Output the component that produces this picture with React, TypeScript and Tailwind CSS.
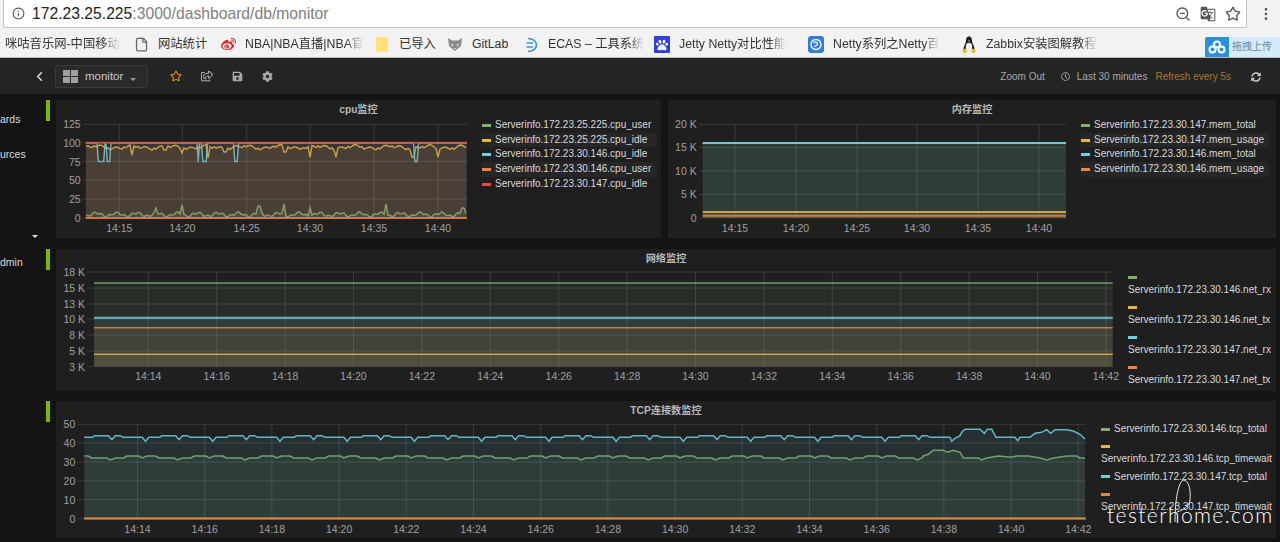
import React from 'react';
import { Info, ZoomOut, Star, EllipsisVertical, File, ChevronLeft } from 'lucide-react';
import { FaRegStar, FaRegShareSquare, FaSave, FaCog, FaRegClock, FaSyncAlt, FaWeibo, FaPaw } from 'react-icons/fa';
import { MdGTranslate } from 'react-icons/md';

const GREEN = '#7eb26d';
const YELLOW = '#eab839';
const BLUE = '#6ed0e0';
const ORANGE = '#ef843c';
const RED = '#e24d42';

type Pt = [number, number];
type Series = { color: string; points: Pt[]; width?: number };
type ChartProps = {
  box: [number, number, number, number];
  plot: { left: number; right: number; top: number; bottom: number };
  yTicks: [string, number][];
  xTicks: [string, number][];
  labelY: number;
  labelGap?: number;
  series: Series[];
};

const toPath = (pts: Pt[]) => pts.map((p) => `${p[0].toFixed(1)},${p[1].toFixed(1)}`).join(' ');

// Charts are drawn in page coordinates, the viewBox just crops the panel's part
const Chart: React.FC<ChartProps> = ({ box, plot, yTicks, xTicks, labelY, labelGap = 5, series }) => (
  <svg
    width={box[2]}
    height={box[3]}
    viewBox={box.join(' ')}
    className="shrink-0"
    fontFamily="'Liberation Sans', sans-serif"
    fontSize="10.5"
  >
    {yTicks.map(([label, y]) => (
      <g key={label}>
        <line x1={plot.left - labelGap + 2} x2={plot.right} y1={y} y2={y} stroke="#d8d9da" strokeOpacity="0.15" />
        <text x={plot.left - labelGap} y={y + 4} textAnchor="end" fill="#a0a0a0">{label}</text>
      </g>
    ))}
    {xTicks.map(([label, x]) => (
      <g key={label}>
        <line x1={x} x2={x} y1={plot.top} y2={plot.bottom} stroke="#d8d9da" strokeOpacity="0.15" />
        <text x={x} y={labelY + 4} textAnchor="middle" fill="#a0a0a0">{label}</text>
      </g>
    ))}
    {series.map((s, i) => (
      <g key={i}>
        <polygon
          points={`${toPath(s.points)} ${s.points[s.points.length - 1][0]},${plot.bottom} ${s.points[0][0]},${plot.bottom}`}
          fill={s.color}
          fillOpacity="0.1"
        />
        <polyline points={toPath(s.points)} fill="none" stroke={s.color} strokeWidth={s.width ?? 1.5} strokeOpacity="0.85" />
      </g>
    ))}
  </svg>
);

const flat = (x0: number, x1: number, y: number): Pt[] => [[x0, y], [x1, y]];

const cpuYellow = (): Pt[] => {
  const dips: Pt[] = [[132, 155], [182.5, 153], [208, 158], [285, 152], [310, 157], [336, 157], [413, 157], [438, 157], [225, 152], [165, 150]];
  const pts: Pt[] = [];
  for (let x = 86; x <= 467; x += 2) {
    let y = 147.5 + 1.6 * Math.sin(x * 0.42) + 1.3 * Math.sin(x * 0.17 + 1) - (Math.sin(x * 0.42) > 0.9 ? 2 : 0);
    dips.forEach(([dx, dy]) => {
      if (Math.abs(dx - x) < 1.5) y = dy;
    });
    pts.push([x, y]);
  }
  return pts;
};

const cpuGreen = (): Pt[] => {
  const spikes: Pt[] = [[156.5, 208], [182.7, 205], [259, 206], [284.5, 204], [310, 208], [386.5, 204], [463, 208]];
  const pts: Pt[] = [];
  for (let x = 86; x <= 467; x += 2) {
    let y = 214.5 + 1.7 * Math.sin(x * 0.31) + 1.1 * Math.sin(x * 0.83 + 2);
    spikes.forEach(([sx, sy]) => {
      if (Math.abs(sx - x) < 1.2) y = sy;
    });
    pts.push([x, y]);
  }
  return pts;
};

const cpuBlue = (): Pt[] => {
  const dips: Pt[] = [[97, 105], [106, 111], [197, 199.5], [201.5, 207.5], [233.5, 238.5], [413.5, 418.5]];
  const pts: Pt[] = [[86, 143]];
  dips.forEach(([a, b]) => {
    pts.push([a, 143], [a + 1.3, 161.5], [b - 1.3, 161.5], [b, 143]);
  });
  pts.push([467, 143]);
  return pts;
};

// Traced from the reference at 3x, repeats every two minutes
const tcpBlueCycle: Pt[] = [[0, 127], [25, 127], [30, 122], [72, 122], [82, 134], [92, 122], [107, 122], [115, 127], [172, 127], [182, 139], [192, 127]];
const tcpGreenCycle: Pt[] = [[0, 183], [12, 183], [22, 189], [67, 189], [77, 195], [92, 189], [117, 189], [127, 183], [162, 183], [172, 189], [187, 183]];
const tcpBlueTail: Pt[] = [[270, 127], [275, 139], [285, 130], [300, 122], [305, 112], [315, 103], [360, 103], [373, 115], [382, 103], [395, 103], [408, 127], [465, 127], [473, 137], [480, 127], [510, 127], [525, 115], [545, 112], [560, 104], [572, 115], [585, 104], [620, 104], [640, 108], [660, 118], [675, 132]];
const tcpGreenTail: Pt[] = [[190, 183], [205, 178], [220, 166], [250, 166], [262, 172], [280, 166], [300, 172], [310, 189], [355, 189], [365, 195], [380, 189], [415, 183], [455, 187], [470, 183], [505, 183], [540, 189], [560, 195], [580, 189], [620, 183], [650, 183], [660, 189], [675, 189]];

const tcpLine = (cycle: Pt[], tail: Pt[]): Pt[] => {
  const tailStart = 860 + tail[0][0] / 3;
  const pts: Pt[] = [];
  for (let c = 0; c < 16; c++) {
    cycle.forEach(([x, y]) => {
      const gx = 84.3 + (c * 200 + x) / 3 * 1.0085;
      if (gx < tailStart) pts.push([gx, 395 + y / 3]);
    });
  }
  tail.forEach(([x, y]) => pts.push([860 + x / 3, 395 + y / 3]));
  return pts;
};

const twoMinuteTicks = (start: number, step: number): [string, number][] =>
  Array.from({ length: 15 }, (_, i) => {
    const minute = 14 + i * 2;
    return [`14:${minute}`, start + i * step] as [string, number];
  });

const cpuTicks: [string, number][] = [['14:15', 119.3], ['14:20', 182.3], ['14:25', 246.7], ['14:30', 310], ['14:35', 374], ['14:40', 438]];
const memTicks: [string, number][] = [['14:15', 735], ['14:20', 796], ['14:25', 857], ['14:30', 917], ['14:35', 978], ['14:40', 1039]];

const Legend: React.FC<{ items: [string, string][]; rowClass: string; stripe?: boolean }> = ({ items, rowClass, stripe }) => (
  <>
    {items.map(([color, label], i) => (
      <div key={label} className={`${rowClass} ${stripe && i % 2 === 1 ? 'bg-[#262627]' : ''}`}>
        <span className="inline-block w-[9px] h-[3px] mr-[4px] align-middle" style={{ backgroundColor: color }} />
        {label}
      </div>
    ))}
  </>
);

const Bookmark: React.FC<{ icon?: React.ReactNode; label: string; width: string; fade?: boolean }> = ({ icon, label, width, fade }) => (
  <div className={`flex items-center gap-[9px] shrink-0 ${width}`}>
    {icon && <span className="w-[16px] flex justify-center shrink-0">{icon}</span>}
    <span
      className={`whitespace-nowrap overflow-hidden text-[12.3px] text-[#333] ${fade ? '[mask-image:linear-gradient(to_right,black_85%,transparent)]' : ''}`}
    >
      {label}
    </span>
  </div>
);

const RowMark: React.FC = () => <div className="w-[4px] h-[21px] bg-[#7eb500] shrink-0 mr-[6px]" />;

const Title: React.FC<{ text: string }> = ({ text }) => (
  <div className="h-[16px] mt-[2px] text-center text-[10.2px] leading-[16px] font-bold text-[#b8b8b8]">{text}</div>
);

const App: React.FC = () => {
  return (
    <div className="relative w-[1280px] h-[542px] overflow-hidden bg-[#141414] font-['Liberation_Sans','Noto_Sans_CJK_SC',sans-serif]">
      {/* browser toolbar */}
      <div className="h-[30px] bg-[#f2f2f2] flex items-start pl-[3px]">
        <div className="w-[1244px] h-[28px] bg-white border border-[#c4c4c4] border-t-0 rounded-b-[2px] flex items-center pl-[8px] pr-[5px]">
          <Info size={13} className="text-[#555] mr-[7px]" />
          <span className="text-[15.7px] text-[#222]">172.23.25.225</span>
          <span className="text-[15.7px] text-[#808080]">:3000/dashboard/db/monitor</span>
          <div className="ml-auto flex items-center gap-[9px] text-[#555]">
            <ZoomOut size={16} />
            <MdGTranslate size={16} />
            <Star size={16} />
          </div>
        </div>
        <EllipsisVertical size={16} className="ml-[11px] mt-[6px] text-[#555]" />
      </div>

      {/* bookmarks */}
      <div className="h-[28px] bg-[#f2f2f2] border-b border-[#b8b8b8] flex items-center pl-[5px] pt-[2px] relative">
        <Bookmark label="咪咕音乐网-中国移动" width="w-[128px]" fade />
        <Bookmark icon={<File size={15} className="text-[#666]" />} label="网站统计" width="w-[87px]" />
        <Bookmark icon={<FaWeibo size={15} className="text-[#e02b2f]" />} label="NBA|NBA直播|NBA官" width="w-[154px]" fade />
        <Bookmark icon={<span className="block w-[12px] h-[15px] bg-[#ffe27a] rounded-[1px]" />} label="已导入" width="w-[73px]" />
        <Bookmark
          icon={
            <svg width="16" height="15" viewBox="0 0 16 15">
              <path d="M1 1 L5 3.5 H11 L15 1 L14 9 L8 14 L2 9 Z" fill="#8a8a8a" />
              <path d="M3.5 6.5 L6.5 8 L5.5 9.5 Z M12.5 6.5 L9.5 8 L10.5 9.5 Z M7 11 H9 L8 12.5 Z" fill="#f2f2f2" />
            </svg>
          }
          label="GitLab"
          width="w-[76px]"
        />
        <Bookmark
          icon={
            <svg width="16" height="16" viewBox="0 0 16 16" fill="none" stroke="#3a9ad9" strokeWidth="1.7">
              <path d="M5 1.5 C10 1.5 13.5 4.5 13.5 8 C13.5 11.5 10 14.5 5 14.5 M3.5 6 H10 M3.5 10 H10" />
            </svg>
          }
          label="ECAS – 工具系统"
          width="w-[131px]"
          fade
        />
        <Bookmark
          icon={
            <span className="w-[16px] h-[17px] bg-[#2f3fe0] rounded-[1px] flex items-center justify-center">
              <FaPaw size={12} className="text-white" />
            </span>
          }
          label="Jetty Netty对比性能"
          width="w-[154px]"
          fade
        />
        <Bookmark
          icon={
            <svg width="16" height="17" viewBox="0 0 16 17">
              <rect width="16" height="17" rx="3" fill="#2f7de0" />
              <circle cx="8" cy="8.5" r="5" fill="none" stroke="white" strokeWidth="1.3" />
              <path d="M5.5 7 C7 5.5 10 6 9.5 8 C9 10 6.5 9.5 6.5 11" fill="none" stroke="white" strokeWidth="1.1" />
            </svg>
          }
          label="Netty系列之Netty百"
          width="w-[153px]"
          fade
        />
        <Bookmark
          icon={
            <svg width="16" height="18" viewBox="0 0 16 18">
              <path d="M8 0.5 C5.5 0.5 5 3 5 5 C5 7.5 2.5 9.5 2.5 13 H13.5 C13.5 9.5 11 7.5 11 5 C11 3 10.5 0.5 8 0.5 Z" fill="#1d1d1d" />
              <ellipse cx="8" cy="11" rx="3.2" ry="4.2" fill="#f4f4f4" />
              <path d="M1 14 L5 12.5 L6 16 L3 17.5 Z M15 14 L11 12.5 L10 16 L13 17.5 Z" fill="#f0b820" />
              <path d="M6.8 4.5 H9.2 L8 6 Z" fill="#f0b820" />
            </svg>
          }
          label="Zabbix安装图解教程"
          width="w-[136px]"
          fade
        />
        <div className="absolute right-0 bottom-0 h-[20px] w-[75px] flex">
          <div className="w-[24px] bg-[#2b8fe0] flex items-center justify-center rounded-tl-[2px]">
            <svg width="18" height="14" viewBox="0 0 18 14" fill="none" stroke="white" strokeWidth="2">
              <circle cx="9" cy="4.5" r="3" />
              <circle cx="4.5" cy="9.5" r="3" />
              <circle cx="13.5" cy="9.5" r="3" />
            </svg>
          </div>
          <div className="flex-1 bg-[#d4ebfb] text-[10px] leading-[20px] pl-[3px] text-[#6a8aa0]">拖拽上传</div>
        </div>
      </div>

      {/* dashboard navbar */}
      <div className="h-[36px] bg-[#242424] flex items-center text-[#a8a8a8] text-[10px]">
        <ChevronLeft size={15} strokeWidth={2.5} className="ml-[32px] text-[#d8d9da]" />
        <div className="ml-[8px] w-[93px] h-[23px] bg-[#2a2a2b] border border-[#3a3a3a] rounded-[2px] flex items-center pl-[7px]">
          <div className="grid grid-cols-2 gap-[1px] w-[15px] h-[13px] shrink-0">
            <span className="bg-[#a0a0a0]" />
            <span className="bg-[#a0a0a0]" />
            <span className="bg-[#a0a0a0]" />
            <span className="bg-[#a0a0a0]" />
          </div>
          <span className="ml-[7px] mt-[2px] text-[11.5px] text-[#c8c8c8]">monitor</span>
          <span className="ml-[7px] mt-[6px] w-0 h-0 border-x-[3px] border-x-transparent border-t-[3px] border-t-[#999]" />
        </div>
        <div className="ml-[22px] flex items-center gap-[19px]">
          <FaRegStar size={12} className="text-[#f0920a]" />
          <FaRegShareSquare size={12} />
          <FaSave size={11} />
          <FaCog size={11} />
        </div>
        <div className="ml-auto flex items-center pt-[1px]">
          <span>Zoom Out</span>
          <FaRegClock size={9} className="ml-[16px] mr-[7px]" />
          <span>Last 30 minutes</span>
          <span className="ml-[8px] text-[#a9762a]">Refresh every 5s</span>
          <FaSyncAlt size={10} className="ml-[20px] mr-[19px] text-[#c8c8c8]" />
        </div>
      </div>

      {/* sidebar + rows */}
      <div className="flex">
        <div className="w-[46px] shrink-0 flex flex-col items-start text-[10.5px] leading-[16px] text-[#d8d9da]">
          <div className="mt-[17px]">ards</div>
          <div className="mt-[19px]">urces</div>
          <div className="mt-[73px] ml-[32px] w-0 h-0 border-x-[3px] border-x-transparent border-t-[3px] border-t-[#e0e0e0]" />
          <div className="mt-[16px]">dmin</div>
        </div>

        <div className="flex-1 pt-[6px] pr-[4px] flex flex-col">
          <div className="flex h-[138px]">
            <RowMark />
            <div className="w-[605px] bg-[#1f1f20]">
              <Title text="cpu监控" />
              <div className="flex">
                <Chart
                  box={[56, 118, 426, 120]}
                  plot={{ left: 85.7, right: 467, top: 124.3, bottom: 218 }}
                  yTicks={[['125', 124.3], ['100', 142.7], ['75', 161.5], ['50', 180], ['25', 199], ['0', 218]]}
                  xTicks={cpuTicks}
                  labelY={227.5}
                  series={[
                    { color: GREEN, points: cpuGreen() },
                    { color: YELLOW, points: cpuYellow() },
                    { color: BLUE, points: cpuBlue() },
                    { color: ORANGE, points: flat(85.7, 467, 218), width: 2 },
                    { color: RED, points: flat(85.7, 467, 142.7), width: 2 },
                  ]}
                />
                <div className="w-[175px] text-[10px] leading-[14.7px] text-[#d8d9da]">
                  <Legend
                    rowClass="whitespace-nowrap"
                    stripe
                    items={[
                      [GREEN, 'Serverinfo.172.23.25.225.cpu_user'],
                      [YELLOW, 'Serverinfo.172.23.25.225.cpu_idle'],
                      [BLUE, 'Serverinfo.172.23.30.146.cpu_idle'],
                      [ORANGE, 'Serverinfo.172.23.30.146.cpu_user'],
                      [RED, 'Serverinfo.172.23.30.147.cpu_idle'],
                    ]}
                  />
                </div>
              </div>
            </div>
            <div className="ml-[7px] flex-1 bg-[#1f1f20]">
              <Title text="内存监控" />
              <div className="flex">
                <Chart
                  box={[668, 118, 413, 120]}
                  plot={{ left: 702.7, right: 1066, top: 124.3, bottom: 218 }}
                  yTicks={[['20 K', 124.3], ['15 K', 147.3], ['10 K', 171], ['5 K', 194.3], ['0', 218]]}
                  xTicks={memTicks}
                  labelY={227.5}
                  labelGap={6}
                  series={[
                    { color: GREEN, points: flat(702.7, 1066, 143), width: 2 },
                    { color: YELLOW, points: flat(702.7, 1066, 212), width: 2 },
                    { color: BLUE, points: flat(702.7, 1066, 143), width: 2 },
                    { color: ORANGE, points: flat(702.7, 1066, 215.7), width: 2 },
                  ]}
                />
                <div className="w-[188px] text-[10px] leading-[14.7px] text-[#d8d9da]">
                  <Legend
                    rowClass="whitespace-nowrap"
                    stripe
                    items={[
                      [GREEN, 'Serverinfo.172.23.30.147.mem_total'],
                      [YELLOW, 'Serverinfo.172.23.30.147.mem_usage'],
                      [BLUE, 'Serverinfo.172.23.30.146.mem_total'],
                      [ORANGE, 'Serverinfo.172.23.30.146.mem_usage'],
                    ]}
                  />
                </div>
              </div>
            </div>
          </div>

          <div className="flex h-[142px] mt-[11px]">
            <RowMark />
            <div className="flex-1 bg-[#1f1f20]">
              <Title text="网络监控" />
              <div className="flex">
                <Chart
                  box={[56, 267, 1068, 124]}
                  plot={{ left: 94, right: 1112.7, top: 272, bottom: 366.6 }}
                  yTicks={[['18 K', 272], ['15 K', 288], ['13 K', 304], ['10 K', 319], ['8 K', 335], ['5 K', 351], ['3 K', 366.6]]}
                  xTicks={twoMinuteTicks(148.3, 68.4)}
                  labelY={376}
                  labelGap={9}
                  series={[
                    { color: GREEN, points: flat(94, 1112.7, 283) },
                    { color: YELLOW, points: flat(94, 1112.7, 354.3) },
                    { color: BLUE, points: flat(94, 1112.7, 317.7), width: 2 },
                    { color: ORANGE, points: flat(94, 1112.7, 327.7) },
                  ]}
                />
                <div className="ml-[4px] mt-[4px] w-[144px] text-[10px] leading-[12.5px] text-[#d8d9da]">
                  <Legend
                    rowClass="pb-[5px]"
                    items={[
                      [GREEN, 'Serverinfo.172.23.30.146.net_rx'],
                      [YELLOW, 'Serverinfo.172.23.30.146.net_tx'],
                      [BLUE, 'Serverinfo.172.23.30.147.net_rx'],
                      [ORANGE, 'Serverinfo.172.23.30.147.net_tx'],
                    ]}
                  />
                </div>
              </div>
            </div>
          </div>

          <div className="flex h-[137px] mt-[10px]">
            <RowMark />
            <div className="flex-1 bg-[#1f1f20]">
              <Title text="TCP连接数监控" />
              <div className="flex">
                <Chart
                  box={[56, 419, 1041, 119]}
                  plot={{ left: 84.3, right: 1085.7, top: 424.3, bottom: 518.6 }}
                  yTicks={[['50', 424.3], ['40', 443], ['30', 462], ['20', 481], ['10', 499.7], ['0', 518.6]]}
                  xTicks={twoMinuteTicks(137.5, 67.2)}
                  labelY={528.5}
                  labelGap={9}
                  series={[
                    { color: GREEN, points: tcpLine(tcpGreenCycle, tcpGreenTail) },
                    { color: YELLOW, points: flat(84.3, 1085.7, 518.6) },
                    { color: BLUE, points: tcpLine(tcpBlueCycle, tcpBlueTail) },
                    { color: ORANGE, points: flat(84.3, 1085.7, 518.6), width: 2 },
                  ]}
                />
                <div className="ml-[4px] mt-[4px] w-[171px] text-[10px] leading-[12.5px] text-[#d8d9da]">
                  <Legend
                    rowClass="pb-[5px]"
                    items={[
                      [GREEN, 'Serverinfo.172.23.30.146.tcp_total'],
                      [YELLOW, 'Serverinfo.172.23.30.146.tcp_timewait'],
                      [BLUE, 'Serverinfo.172.23.30.147.tcp_total'],
                      [ORANGE, 'Serverinfo.172.23.30.147.tcp_timewait'],
                    ]}
                  />
                </div>
              </div>
            </div>
          </div>
        </div>
      </div>

      {/* watermark over the last legend */}
      <div className="absolute left-[1107px] top-[503px] font-['Lato',sans-serif] font-light text-[21px] leading-[24px] tracking-[1.4px] whitespace-nowrap text-white">
        testerhome.com
      </div>
      <svg width="30" height="50" viewBox="0 0 30 50" className="absolute left-[1168px] top-[476px]" fill="none" stroke="#e8e8e8" strokeWidth="1">
        <path d="M7 46 C7 30 9 8 15 4 C21 4 23 14 22 24 C21 30 16 34 9 36" />
      </svg>
    </div>
  );
};

export default App;
